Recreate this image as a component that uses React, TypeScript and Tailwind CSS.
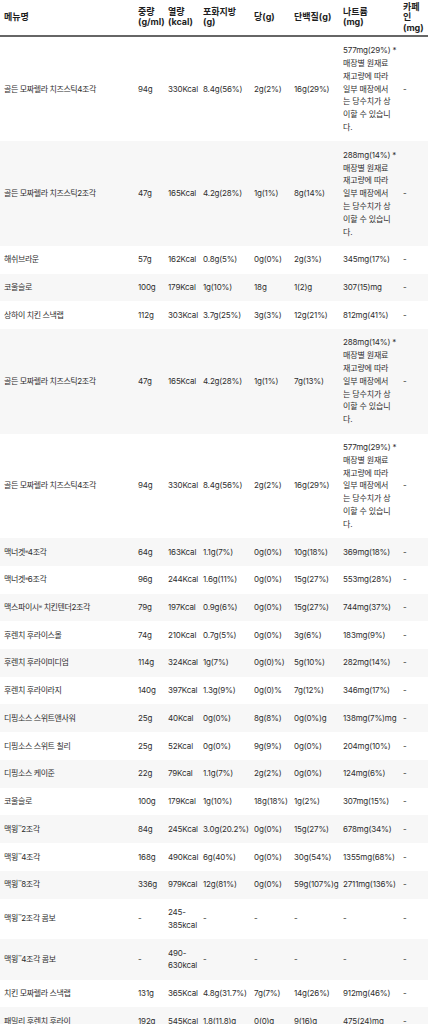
import React from "react";

type Row = {
  name: React.ReactNode;
  w: string;
  kcal: React.ReactNode;
  fat: string;
  sugar: string;
  protein: string;
  sodium: React.ReactNode;
  caf: string;
};

const note = (head: string) => (
  <>
    <span className="block">{head}</span>
    <span className="block">매장별 원재료</span>
    <span className="block">재고량에 따라</span>
    <span className="block">일부 매장에서</span>
    <span className="block">는 당수치가 상</span>
    <span className="block">이할 수 있습니</span>
    <span className="block">다.</span>
  </>
);

const R = () => <sup className="text-[5px] relative -top-[1px]">®</sup>;
const TM = () => <span className="text-[6px] align-top leading-none relative top-[2px]">™</span>;

const rows: Row[] = [
  { name: "골든 모짜렐라 치즈스틱4조각", w: "94g", kcal: "330Kcal", fat: "8.4g(56%)", sugar: "2g(2%)", protein: "16g(29%)", sodium: note("577mg(29%) *"), caf: "-" },
  { name: "골든 모짜렐라 치즈스틱2조각", w: "47g", kcal: "165Kcal", fat: "4.2g(28%)", sugar: "1g(1%)", protein: "8g(14%)", sodium: note("288mg(14%) *"), caf: "-" },
  { name: "해쉬브라운", w: "57g", kcal: "162Kcal", fat: "0.8g(5%)", sugar: "0g(0%)", protein: "2g(3%)", sodium: "345mg(17%)", caf: "-" },
  { name: "코울슬로", w: "100g", kcal: "179Kcal", fat: "1g(10%)", sugar: "18g", protein: "1(2)g", sodium: "307(15)mg", caf: "-" },
  { name: "상하이 치킨 스낵랩", w: "112g", kcal: "303Kcal", fat: "3.7g(25%)", sugar: "3g(3%)", protein: "12g(21%)", sodium: "812mg(41%)", caf: "-" },
  { name: "골든 모짜렐라 치즈스틱2조각", w: "47g", kcal: "165Kcal", fat: "4.2g(28%)", sugar: "1g(1%)", protein: "7g(13%)", sodium: note("288mg(14%) *"), caf: "-" },
  { name: "골든 모짜렐라 치즈스틱4조각", w: "94g", kcal: "330Kcal", fat: "8.4g(56%)", sugar: "2g(2%)", protein: "16g(29%)", sodium: note("577mg(29%) *"), caf: "-" },
  { name: <>맥너겟<R />4조각</>, w: "64g", kcal: "163Kcal", fat: "1.1g(7%)", sugar: "0g(0%)", protein: "10g(18%)", sodium: "369mg(18%)", caf: "-" },
  { name: <>맥너겟<R />6조각</>, w: "96g", kcal: "244Kcal", fat: "1.6g(11%)", sugar: "0g(0%)", protein: "15g(27%)", sodium: "553mg(28%)", caf: "-" },
  { name: <>맥스파이시<R /> 치킨텐더2조각</>, w: "79g", kcal: "197Kcal", fat: "0.9g(6%)", sugar: "0g(0%)", protein: "15g(27%)", sodium: "744mg(37%)", caf: "-" },
  { name: "후렌치 후라이스몰", w: "74g", kcal: "210Kcal", fat: "0.7g(5%)", sugar: "0g(0%)", protein: "3g(6%)", sodium: "183mg(9%)", caf: "-" },
  { name: "후렌치 후라이미디엄", w: "114g", kcal: "324Kcal", fat: "1g(7%)", sugar: "0g(0)%)", protein: "5g(10%)", sodium: "282mg(14%)", caf: "-" },
  { name: "후렌치 후라이라지", w: "140g", kcal: "397Kcal", fat: "1.3g(9%)", sugar: "0g(0)%", protein: "7g(12%)", sodium: "346mg(17%)", caf: "-" },
  { name: "디핑소스 스위트앤사워", w: "25g", kcal: "40Kcal", fat: "0g(0%)", sugar: "8g(8%)", protein: "0g(0%)g", sodium: "138mg(7%)mg", caf: "-" },
  { name: "디핑소스 스위트 칠리", w: "25g", kcal: "52Kcal", fat: "0g(0%)", sugar: "9g(9%)", protein: "0g(0%)", sodium: "204mg(10%)", caf: "-" },
  { name: "디핑소스 케이준", w: "22g", kcal: "79Kcal", fat: "1.1g(7%)", sugar: "2g(2%)", protein: "0g(0%)", sodium: "124mg(6%)", caf: "-" },
  { name: "코울슬로", w: "100g", kcal: "179Kcal", fat: "1g(10%)", sugar: "18g(18%)", protein: "1g(2%)", sodium: "307mg(15%)", caf: "-" },
  { name: <>맥윙<TM />2조각</>, w: "84g", kcal: "245Kcal", fat: "3.0g(20.2%)", sugar: "0g(0%)", protein: "15g(27%)", sodium: "678mg(34%)", caf: "-" },
  { name: <>맥윙<TM />4조각</>, w: "168g", kcal: "490Kcal", fat: "6g(40%)", sugar: "0g(0%)", protein: "30g(54%)", sodium: "1355mg(68%)", caf: "-" },
  { name: <>맥윙<TM />8조각</>, w: "336g", kcal: "979Kcal", fat: "12g(81%)", sugar: "0g(0%)", protein: "59g(107%)g", sodium: "2711mg(136%)", caf: "-" },
  { name: <>맥윙<TM />2조각 콤보</>, w: "-", kcal: <><span className="block">245-</span><span className="block">385kcal</span></>, fat: "-", sugar: "-", protein: "-", sodium: "-", caf: "-" },
  { name: <>맥윙<TM />4조각 콤보</>, w: "-", kcal: <><span className="block">490-</span><span className="block">630kcal</span></>, fat: "-", sugar: "-", protein: "-", sodium: "-", caf: "-" },
  { name: "치킨 모짜렐라 스낵랩", w: "131g", kcal: "365Kcal", fat: "4.8g(31.7%)", sugar: "7g(7%)", protein: "14g(26%)", sodium: "912mg(46%)", caf: "-" },
  { name: "패밀리 후렌치 후라이", w: "192g", kcal: "545Kcal", fat: "1.8(11.8)g", sugar: "0(0)g", protein: "9(16)g", sodium: "475(24)mg", caf: "-" },
];

const td = "pl-[4px] pr-0 py-[7.47px] align-middle whitespace-nowrap";
const tdName = "pl-[4px] pr-0 py-[7.47px] align-middle whitespace-nowrap tracking-[-0.05em]";
const th = "pl-[4px] pr-0 py-[1.5px] align-middle text-left font-bold";

export default function App() {
  return (
    <div
      className="w-[428px] bg-white text-[#2e2e2e] overflow-hidden"
      style={{ fontFamily: 'Inter, "Noto Sans CJK KR", sans-serif' }}
    >
      <table className="table-fixed border-collapse w-[428px]">
        <colgroup>
          <col className="w-[134px]" />
          <col className="w-[30px]" />
          <col className="w-[35px]" />
          <col className="w-[51px]" />
          <col className="w-[40px]" />
          <col className="w-[49px]" />
          <col className="w-[60px]" />
          <col className="w-[29px]" />
        </colgroup>
        <thead>
          <tr className="h-[35px] border-b-2 border-[#666] text-[9px] leading-[10.6px] text-[#1e1e1e]">
            <th className={th}>메뉴명</th>
            <th className={th}>중량<br />(g/ml)</th>
            <th className={th}>열량<br />(kcal)</th>
            <th className={th}>포화지방<br />(g)</th>
            <th className={th}>당(g)</th>
            <th className={th}>단백질(g)</th>
            <th className={th}>나트륨<br />(mg)</th>
            <th className={th}>카페<br />인<br />(mg)</th>
          </tr>
        </thead>
        <tbody className="text-[8px] leading-[12.8px] tracking-[-0.02em]">
          {rows.map((r, i) => (
            <tr key={i} className={i % 2 === 1 ? "bg-[#f7f7f7]" : "bg-white"}>
              <td className={tdName}>{r.name}</td>
              <td className={td}>{r.w}</td>
              <td className={td}>{r.kcal}</td>
              <td className={td}>{r.fat}</td>
              <td className={td}>{r.sugar}</td>
              <td className={td}>{r.protein}</td>
              <td className={td}>{r.sodium}</td>
              <td className={td}>{r.caf}</td>
            </tr>
          ))}
        </tbody>
      </table>
    </div>
  );
}
